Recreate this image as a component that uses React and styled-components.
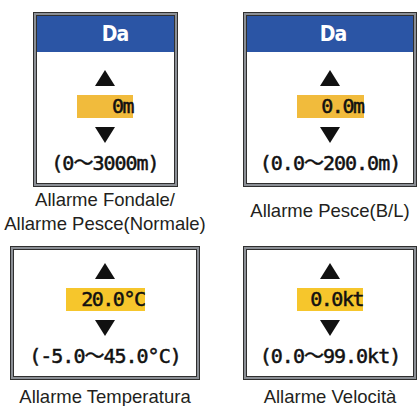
import React from 'react'
import styled, { createGlobalStyle } from 'styled-components'

const GlobalStyle = createGlobalStyle`
  body {
    margin: 0;
    background: #ffffff;
  }
`

const alarms = [
  { id: 'depth', header: true, shift: 20, width: 145, value: '0m', valueWidth: 56, hl: '#f1bb3c', range: '(0〜3000m)', label: ['Allarme Fondale/', 'Allarme Pesce(Normale)'], labelTop: 1 },
  { id: 'fish', header: true, shift: 6, width: 174, value: '0.0m', valueWidth: 67, hl: '#f1bb3c', range: '(0.0〜200.0m)', label: ['Allarme Pesce(B/L)'], labelTop: 12 },
  { id: 'temp', header: false, width: 190, value: '20.0°C', valueWidth: 79, hl: '#f6c62c', range: '(-5.0〜45.0°C)', label: ['Allarme Temperatura'], labelTop: 5 },
  { id: 'speed', header: false, width: 174, value: '0.0kt', valueWidth: 66, hl: '#f6c62c', range: '(0.0〜99.0kt)', label: ['Allarme Velocità'], labelTop: 5 },
]

const Arrow = ({ down }) => (
  <ArrowIcon viewBox="0 0 20 16" width="20" height="16">
    {down
      ? <polygon points="0,0 20,0 10,16" fill="#111" />
      : <polygon points="10,0 20,16 0,16" fill="#111" />}
  </ArrowIcon>
)

const AlarmBox = ({ item }) => (
  <Cell>
    <Frame $w={item.width} $h={item.header ? 175 : 134}>
      <Panel>
        {item.header && <Header $shift={item.shift}>Da</Header>}
        <Body>
          <Arrow />
          <Value $w={item.valueWidth} $bg={item.hl}>{item.value}</Value>
          <Arrow down />
          <Range>{item.range}</Range>
        </Body>
      </Panel>
    </Frame>
    <Label $mt={item.labelTop}>
      {item.label.map((line) => <div key={line}>{line}</div>)}
    </Label>
  </Cell>
)

export default function App() {
  return (
    <>
      <GlobalStyle />
      <Page>
        {alarms.map((item) => <AlarmBox key={item.id} item={item} />)}
      </Page>
    </>
  )
}

const Page = styled.div`
  display: grid;
  grid-template-columns: 210px 174px;
  grid-template-rows: 234px auto;
  column-gap: 33px;
  padding-top: 12px;
  width: 419px;
  height: 406px;
  box-sizing: border-box;
  overflow: hidden;
`

const Cell = styled.div`
  display: flex;
  flex-direction: column;
  align-items: center;
`

const Frame = styled.div`
  width: ${(p) => p.$w}px;
  height: ${(p) => p.$h}px;
  box-sizing: border-box;
  background: #8b8f95;
  border: 1px solid #2f2f2f;
  padding: 2px;
  flex-shrink: 0;
`

const Panel = styled.div`
  height: 100%;
  box-sizing: border-box;
  border: 1px solid #2f2f2f;
  background: #ffffff;
  display: flex;
  flex-direction: column;
`

const Header = styled.div`
  height: 36px;
  flex-shrink: 0;
  background: #2b55a5;
  color: #ffffff;
  display: flex;
  align-items: center;
  justify-content: center;
  padding-left: ${(p) => p.$shift}px;
  font-family: "DejaVu Sans Condensed", "DejaVu Sans", sans-serif;
  font-weight: bold;
  font-size: 21px;
  letter-spacing: -1px;
`

const Body = styled.div`
  flex: 1;
  display: flex;
  flex-direction: column;
  align-items: center;
  justify-content: flex-end;
  padding-bottom: 10px;
`

const ArrowIcon = styled.svg`
  display: block;
`

const Value = styled.div`
  width: ${(p) => p.$w}px;
  height: 23px;
  margin: 9px 0;
  background: ${(p) => p.$bg};
  color: #111;
  text-align: right;
  font-family: "DejaVu Sans Mono", "Noto Sans CJK JP", monospace;
  font-size: 20px;
  line-height: 23px;
  letter-spacing: -1.5px;
  -webkit-text-stroke: 0.5px #111;
  white-space: nowrap;
`

const Range = styled.div`
  margin-top: 10px;
  height: 20px;
  color: #111;
  font-family: "DejaVu Sans Mono", "Noto Sans CJK JP", monospace;
  font-size: 20px;
  line-height: 20px;
  letter-spacing: -1px;
  -webkit-text-stroke: 0.5px #111;
  white-space: nowrap;
`

const Label = styled.div`
  margin-top: ${(p) => p.$mt}px;
  font-family: "Liberation Sans", Arial, sans-serif;
  font-size: 18.5px;
  line-height: 24px;
  color: #231f20;
  text-align: center;
  white-space: nowrap;
`
